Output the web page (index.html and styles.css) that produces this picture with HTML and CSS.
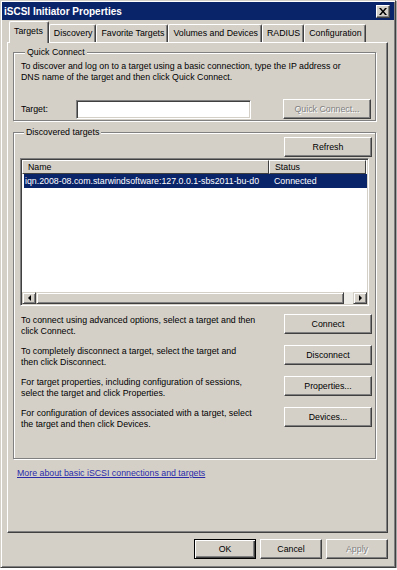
FILE: index.html
```html
<!DOCTYPE html>
<html lang="en">
<head>
  <meta charset="UTF-8" />
  <title>iSCSI Initiator Properties</title>
  <link rel="stylesheet" href="styles.css">
</head>
<body>
  <div class="window">
    <div class="titlebar">
      <span class="title">iSCSI Initiator Properties</span>
      <button class="close">
        <svg width="8" height="7" viewBox="0 0 8 7"><path d="M0 0h2l2 2.5L6 0h2L5 3.5 8 7H6L4 4.5 2 7H0l3-3.5z" fill="#000"/></svg>
      </button>
    </div>

    <div class="tabs">
      <div class="tab active">Targets</div>
      <div class="tab">Discovery</div>
      <div class="tab">Favorite Targets</div>
      <div class="tab">Volumes and Devices</div>
      <div class="tab">RADIUS</div>
      <div class="tab">Configuration</div>
    </div>

    <div class="panel">
      <fieldset class="group quick">
        <legend>Quick Connect</legend>
        <p class="note">To discover and log on to a target using a basic connection, type the IP address or<br>DNS name of the target and then click Quick Connect.</p>
        <div class="target-row">
          <label class="target-label">Target:</label>
          <div class="textbox"></div>
          <button class="btn disabled">Quick Connect...</button>
        </div>
      </fieldset>

      <fieldset class="group discovered">
        <legend>Discovered targets</legend>
        <button class="btn refresh">Refresh</button>
        <div class="listview">
          <div class="list-head">
            <div class="col col-name">Name</div>
            <div class="col col-status">Status</div>
          </div>
          <div class="list-body">
            <div class="list-row selected">
              <span class="cell-name">iqn.2008-08.com.starwindsoftware:127.0.0.1-sbs2011-bu-d0</span>
              <span class="cell-status">Connected</span>
            </div>
          </div>
          <div class="hscroll">
            <div class="sb-btn"><span class="arrow-left"></span></div>
            <div class="sb-thumb"></div>
            <div class="sb-track"></div>
            <div class="sb-btn"><span class="arrow-right"></span></div>
          </div>
        </div>

        <div class="actions">
          <div class="action">
            <p>To connect using advanced options, select a target and then<br>click Connect.</p>
            <button class="btn">Connect</button>
          </div>
          <div class="action">
            <p>To completely disconnect a target, select the target and<br>then click Disconnect.</p>
            <button class="btn">Disconnect</button>
          </div>
          <div class="action">
            <p>For target properties, including configuration of sessions,<br>select the target and click Properties.</p>
            <button class="btn">Properties...</button>
          </div>
          <div class="action">
            <p>For configuration of devices associated with a target, select<br>the target and then click Devices.</p>
            <button class="btn">Devices...</button>
          </div>
        </div>
      </fieldset>

      <a class="help-link" href="#">More about basic iSCSI connections and targets</a>
    </div>

    <div class="footer">
      <button class="btn default">OK</button>
      <button class="btn">Cancel</button>
      <button class="btn disabled">Apply</button>
    </div>
  </div>
</body>
</html>
```

FILE: styles.css
```css
:root {
  --face: #d4d0c8;
  --light: #ffffff;
  --shadow: #808080;
  --dark: #404040;
  --navy: #0a246a;
}

body {
  margin: 0;
  background: #ffffff;
  font-family: "Liberation Sans", Arial, sans-serif;
  font-size: 8.8px;
  color: #000;
}

.window {
  box-sizing: border-box;
  width: 396px;
  height: 568px;
  background: var(--face);
  border: 1px solid;
  border-color: var(--face) var(--dark) var(--dark) var(--face);
  box-shadow: inset 1px 1px 0 var(--light), inset -1px -1px 0 var(--shadow), 1px 1px 1px rgba(0, 0, 0, 0.35);
  padding: 1px 7px 4px 1px;
  display: flex;
  flex-direction: column;
}

.titlebar {
  height: 18px;
  margin-right: -6px;
  background: var(--navy);
  color: #fff;
  display: flex;
  align-items: center;
  justify-content: space-between;
  padding: 0 4px 0 2px;
}

.title {
  font-weight: bold;
  font-size: 10px;
}

.close {
  width: 14px;
  height: 13px;
  padding: 0;
  background: var(--face);
  border: 1px solid;
  border-color: var(--light) var(--dark) var(--dark) var(--light);
  box-shadow: inset -1px -1px 0 var(--shadow);
  display: flex;
  align-items: center;
  justify-content: center;
}

/* tabs */
.tabs {
  display: flex;
  align-items: flex-end;
  margin-top: 1px;
  padding-left: 7px;
  height: 21px;
}

.tab {
  box-sizing: border-box;
  height: 18px;
  line-height: 16px;
  padding: 0 3px 0 4px;
  border-top: 1px solid var(--light);
  border-left: 1px solid var(--light);
  border-right: 1px solid var(--dark);
  box-shadow: inset -1px 0 0 var(--shadow);
  border-radius: 2px 2px 0 0;
}

.tab.active {
  height: 22px;
  line-height: 18px;
  padding: 0 5px 0 4px;
  margin-bottom: -1px;
  background: var(--face);
  position: relative;
  z-index: 1;
}

/* property page */
.panel {
  box-sizing: border-box;
  height: 491px;
  margin-left: 5px;
  border: 1px solid;
  border-color: var(--light) var(--dark) var(--dark) var(--light);
  box-shadow: inset -1px -1px 0 var(--shadow);
  padding: 4px 11px 0 5px;
  display: flex;
  flex-direction: column;
}

.group {
  margin: 0;
  border: 1px solid var(--shadow);
  box-shadow: inset 1px 1px 0 var(--light), 1px 1px 0 var(--light);
  min-width: 0;
}

.group legend {
  padding: 0 2px;
  margin-left: 4px;
  line-height: 11px;
  background: var(--face);
}

p {
  margin: 0;
  line-height: 11px;
}

.quick {
  padding: 3px 4px 1px 7px;
}

.target-row {
  display: flex;
  align-items: center;
  margin-top: 16px;
}

.target-label {
  width: 55px;
}

.textbox {
  box-sizing: border-box;
  width: 175px;
  height: 19px;
  background: #fff;
  border: 1px solid;
  border-color: var(--shadow) var(--light) var(--light) var(--shadow);
  box-shadow: inset 1px 1px 0 var(--dark), inset -1px -1px 0 var(--face);
}

.btn {
  box-sizing: border-box;
  width: 88px;
  height: 20px;
  padding: 0;
  font: inherit;
  color: #000;
  background: var(--face);
  border: 1px solid;
  border-color: var(--light) var(--dark) var(--dark) var(--light);
  box-shadow: inset -1px -1px 0 var(--shadow);
}

.target-row .btn {
  margin-left: auto;
}

.btn.disabled {
  color: var(--shadow);
  text-shadow: 1px 1px 0 var(--light);
}

.discovered {
  margin-top: 6px;
  padding: 1px 3px 29px 6px;
  display: flex;
  flex-direction: column;
}

.refresh {
  align-self: flex-end;
  margin-top: -2px;
  margin-bottom: 1px;
}

/* list view */
.listview {
  box-sizing: border-box;
  height: 148px;
  margin-right: 3px;
  background: #fff;
  border: 1px solid;
  border-color: var(--shadow) var(--light) var(--light) var(--shadow);
  box-shadow: inset 1px 1px 0 var(--dark), inset -1px -1px 0 var(--face);
  padding: 1px;
  display: flex;
  flex-direction: column;
}

.list-head {
  display: flex;
  height: 14px;
}

.col {
  box-sizing: border-box;
  height: 14px;
  line-height: 12px;
  padding-left: 5px;
  background: var(--face);
  border-top: 1px solid var(--light);
  border-left: 1px solid var(--light);
  border-right: 1px solid var(--dark);
  border-bottom: 1px solid var(--dark);
}

.col-name {
  width: 247px;
}

.col-status {
  width: 97px;
}

.list-body {
  flex: 1;
}

.list-row {
  display: flex;
  height: 14px;
  line-height: 14px;
  margin-left: 2px;
}

.list-row.selected {
  background: var(--navy);
  color: #fff;
}

.cell-name {
  width: 246px;
  padding-left: 1px;
  white-space: nowrap;
  overflow: hidden;
}

.cell-status {
  padding-left: 3px;
}

.hscroll {
  display: flex;
  height: 12px;
  background: #eeede8;
}

.sb-btn, .sb-thumb {
  box-sizing: border-box;
  background: var(--face);
  border: 1px solid;
  border-color: var(--face) var(--dark) var(--dark) var(--face);
  box-shadow: inset 1px 1px 0 var(--light), inset -1px -1px 0 var(--shadow);
}

.sb-btn {
  width: 14px;
  display: flex;
  align-items: center;
  justify-content: center;
}

.sb-thumb {
  width: 308px;
}

.sb-track {
  flex: 1;
}

.arrow-left {
  border-top: 3px solid transparent;
  border-bottom: 3px solid transparent;
  border-right: 3px solid #000;
}

.arrow-right {
  border-top: 3px solid transparent;
  border-bottom: 3px solid transparent;
  border-left: 3px solid #000;
}

/* actions */
.actions {
  display: flex;
  flex-direction: column;
  gap: 9px;
  margin-top: 8px;
}

.action {
  display: flex;
  justify-content: space-between;
  align-items: flex-start;
  height: 22px;
}

.action p {
  padding-left: 1px;
  margin-top: 1px;
}

.help-link {
  margin: 9px 0 0 4px;
  line-height: 11px;
  color: #2a2aa8;
}

/* dialog buttons */
.footer {
  display: flex;
  justify-content: flex-end;
  gap: 4px;
  margin-top: 6px;
}

.footer .btn {
  width: 62px;
  height: 20px;
}

.btn.default {
  border-color: #000;
  box-shadow: inset 1px 1px 0 var(--light), inset -1px -1px 0 var(--dark), inset -2px -2px 0 var(--shadow);
}
```
